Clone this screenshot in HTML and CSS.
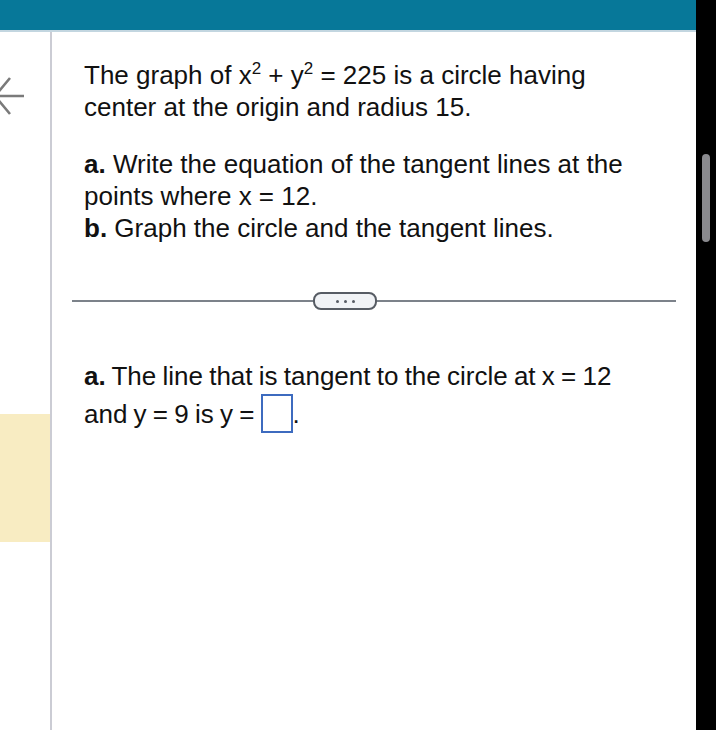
FILE: index.html
```html
<!DOCTYPE html>
<html lang="en">
  <head>
    <meta charset="UTF-8">
    <title>Tangent Lines</title>
    <link rel="stylesheet" href="styles.css">
  </head>
  <body>
    <div id="screen">
      <div id="app">
        <div class="top-bar"></div>
        <div class="main">
          <div class="side">
            <svg class="back-arrow" width="30" height="50" viewBox="0 0 30 50">
              <path d="M0 26 H24 M-5 26 L10 8 M-5 26 L10 44" fill="none" stroke="#7a7a7a" stroke-width="2.6"/>
            </svg>
            <div class="side-note"></div>
          </div>
          <div class="content">
            <p class="question">The graph of x<sup>2</sup> + y<sup>2</sup> = 225 is a circle having center at the origin and radius 15.</p>
            <p class="question parts"><b>a.</b> Write the equation of the tangent lines at the points where x = 12.<br><b>b.</b> Graph the circle and the tangent lines.</p>
            <div class="divider">
              <span class="more-btn"><i></i><i></i><i></i></span>
            </div>
            <p class="answer"><b>a.</b> The line that is tangent to the circle at x = 12 and y = 9 is y = <span class="answer-box"></span>.</p>
          </div>
        </div>
      </div>
      <div class="scroll-strip">
        <div class="thumb"></div>
      </div>
      <div class="edge"></div>
    </div>
  </body>
</html>
```

FILE: styles.css
```css
body,
html {
  margin: 0;
  height: 100%;
  background: #fff;
  font-family: 'Liberation Sans', Arial, sans-serif;
  color: #111;
}

#screen {
  display: flex;
  height: 730px;
  overflow: hidden;
}

#app {
  width: 696px;
  display: flex;
  flex-direction: column;
}

.top-bar {
  height: 30px;
  background: #077899;
  border-bottom: 2px solid #c3d6e0;
}

.main {
  flex: 1;
  display: flex;
}

.side {
  width: 50px;
  border-right: 2px solid #cbccd4;
  display: flex;
  flex-direction: column;
}

.back-arrow {
  margin-top: 38px;
  display: block;
}

.side-note {
  margin-top: 294px;
  height: 128px;
  background: #f8ecc2;
}

.content {
  flex: 1;
  padding: 0 20px 0 20px;
}

.question {
  font-size: 26px;
  line-height: 32px;
  margin: 27px 30px 0 12px;
}

.question sup {
  font-size: 17px;
  line-height: 0;
  vertical-align: 10px;
}

.parts {
  margin-top: 25px;
}

.divider {
  margin-top: 56px;
  height: 2px;
  background: #7c828a;
  position: relative;
}

.more-btn {
  position: absolute;
  left: 241px;
  top: -8px;
  width: 60px;
  height: 14px;
  border: 2px solid #575c64;
  border-radius: 8px;
  background: #f1f3f6;
  display: flex;
  align-items: center;
  justify-content: center;
  gap: 5px;
}

.more-btn i {
  width: 3px;
  height: 3px;
  border-radius: 50%;
  background: #575c64;
}

.answer {
  font-size: 26px;
  line-height: 35px;
  word-spacing: -1px;
  margin: 57px 30px 0 12px;
}

.answer-box {
  display: inline-block;
  width: 28px;
  height: 35px;
  border: 2px solid #3d6bbf;
  vertical-align: -10px;
}

.scroll-strip {
  width: 20px;
  background: #000;
  position: relative;
}

.thumb {
  position: absolute;
  left: 6px;
  top: 154px;
  width: 8px;
  height: 88px;
  border-radius: 4px;
  background: #8a8a8e;
}

.edge {
  width: 6px;
  background: #fff;
}
```
